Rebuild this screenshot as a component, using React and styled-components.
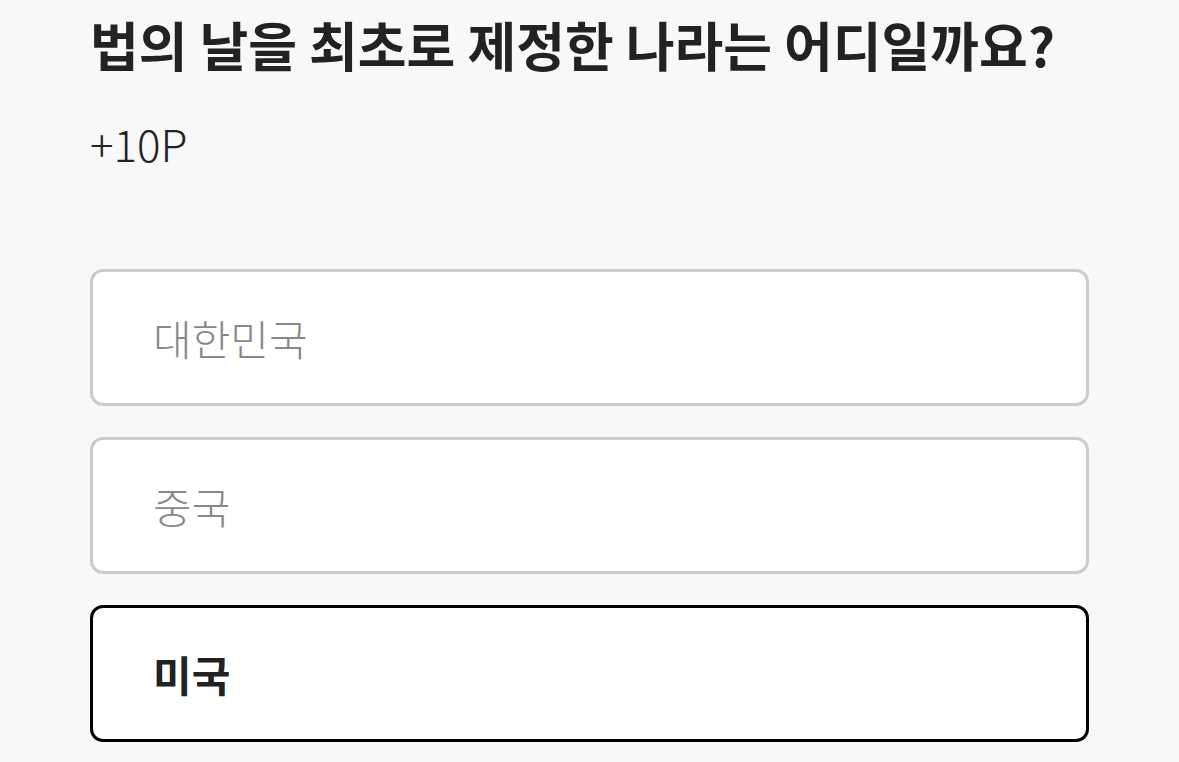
import React, { useState } from "react";
import styled, { createGlobalStyle } from "styled-components";

const GlobalStyle = createGlobalStyle`
  html, body {
    margin: 0;
    padding: 0;
    background: #f8f8f8;
  }
  body {
    font-family: "Noto Sans CJK KR", "Noto Sans", sans-serif;
  }
`;

const Page = styled.div`
  padding: 8px 90px 0 90px;
  display: flex;
  flex-direction: column;
`;

const Question = styled.h1`
  margin: 0;
  font-size: 53px;
  font-weight: 700;
  line-height: 72px;
  color: #222;
  white-space: nowrap;
`;

const Point = styled.p`
  margin: 35px 0 0 0;
  font-size: 44px;
  font-weight: 300;
  line-height: 56px;
  color: #222;
`;

const Options = styled.div`
  display: flex;
  flex-direction: column;
  gap: 31px;
  margin-top: 98px;
`;

const Option = styled.button`
  display: flex;
  align-items: center;
  box-sizing: border-box;
  height: 137px;
  padding: 0 0 0 60px;
  background: #fff;
  border: 3px solid ${(p) => (p.$selected ? "#000" : "#cccccc")};
  border-radius: 13px;
  font-family: inherit;
  font-size: 42px;
  font-weight: ${(p) => (p.$selected ? 700 : 300)};
  color: ${(p) => (p.$selected ? "#222" : "#888")};
  text-align: left;
  cursor: pointer;
`;

const choices = ["대한민국", "중국", "미국"];

function App() {
  const [selected, setSelected] = useState(2);
  return (
    <>
      <GlobalStyle />
      <Page>
        <Question>법의 날을 최초로 제정한 나라는 어디일까요?</Question>
        <Point>+10P</Point>
        <Options>
          {choices.map((c, i) => (
            <Option key={c} $selected={selected === i} onClick={() => setSelected(i)}>
              {c}
            </Option>
          ))}
        </Options>
      </Page>
    </>
  );
}

export default App;
